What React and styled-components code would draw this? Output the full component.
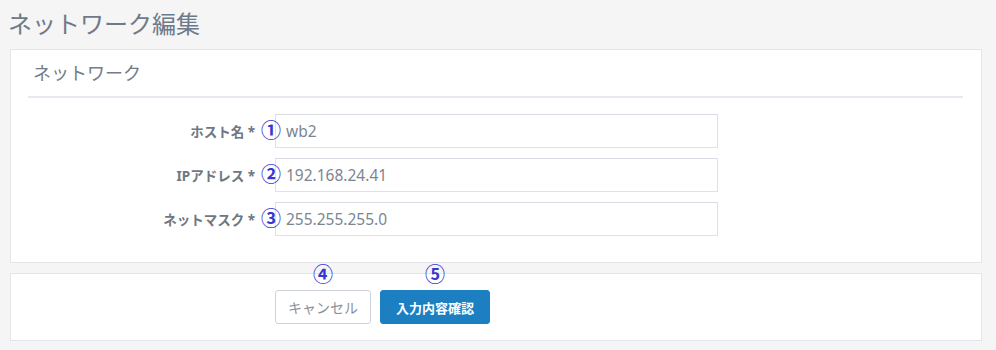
import React from 'react';
import styled, { createGlobalStyle } from 'styled-components';

const Global = createGlobalStyle`
  body {
    margin: 0;
    background: #f5f5f5;
    font-family: "Noto Sans", "Noto Sans CJK JP", sans-serif;
  }
`

const Page = styled.div`
  padding: 0 14px 0 10px;
`

const Title = styled.h1`
  margin: 0;
  padding: 6px 0 0 0;
  margin-left: -2px;
  height: 43px;
  font-size: 24px;
  font-weight: 400;
  color: #6d7a8a;
  line-height: 36px;
`

const Panel = styled.div`
  background: #fff;
  border: 1px solid #e4e4ea;
  margin-bottom: 10px;
  padding: ${p => p.$pad || '0'};
`

const Heading = styled.div`
  margin: 0 18px 0 17px;
  padding: 11px 5px 0 5px;
  height: 35px;
  font-size: 18px;
  color: #737d88;
  line-height: 24px;
  border-bottom: 2px solid #e6e9ef;
`

const Form = styled.div`
  display: flex;
  flex-direction: column;
  gap: 10px;
  padding: 16px 0 26px 0;
`

const Row = styled.div`
  display: flex;
  align-items: center;
`

const Label = styled.label`
  width: 264px;
  box-sizing: border-box;
  padding-right: 20px;
  text-align: right;
  font-size: 13.5px;
  font-weight: 700;
  color: #6f7782;
`

const Field = styled.div`
  position: relative;
`

const Input = styled.input`
  width: 443px;
  height: 34px;
  box-sizing: border-box;
  border: 1px solid #dfe1e8;
  border-top-color: #d8dbe3;
  padding: 0 10px;
  font-family: "Noto Sans", "Noto Sans CJK JP", sans-serif;
  font-size: 15.5px;
  color: #7b8591;
  outline: none;
`

const Mark = styled.span`
  position: absolute;
  font-family: "Noto Sans CJK JP", sans-serif;
  font-size: 20px;
  font-weight: 700;
  line-height: 20px;
  color: #3838cf;
  pointer-events: none;
  ${p => p.$side ? `
    left: -14px;
    top: 6px;
  ` : `
    left: 50%;
    transform: translateX(-50%);
    top: -27px;
  `}
`

const Actions = styled.div`
  display: flex;
  gap: 9px;
  padding-left: 264px;
`

const Button = styled.button`
  position: relative;
  height: 34px;
  box-sizing: border-box;
  padding: 0 ${p => p.$primary ? '15px' : '12px'};
  border-radius: 3px;
  font-family: "Noto Sans", "Noto Sans CJK JP", sans-serif;
  font-size: ${p => p.$primary ? '13px' : '14px'};
  font-weight: ${p => p.$primary ? 700 : 400};
  border: 1px solid ${p => p.$primary ? '#1b7fc2' : '#cfd2d8'};
  background: ${p => p.$primary ? '#1b7fc2' : '#fff'};
  color: ${p => p.$primary ? '#fff' : '#8a9099'};
`

const fields = [
  { label: 'ホスト名 *', value: 'wb2', mark: '①' },
  { label: 'IPアドレス *', value: '192.168.24.41', mark: '②' },
  { label: 'ネットマスク *', value: '255.255.255.0', mark: '③' },
]

export default function App() {
  return (
    <Page>
      <Global />
      <Title>ネットワーク編集</Title>
      <Panel>
        <Heading>ネットワーク</Heading>
        <Form>
          {fields.map(f => (
            <Row key={f.label}>
              <Label>{f.label}</Label>
              <Field>
                <Input defaultValue={f.value} />
                <Mark $side>{f.mark}</Mark>
              </Field>
            </Row>
          ))}
        </Form>
      </Panel>
      <Panel $pad="16px 0">
        <Actions>
          <Button>キャンセル<Mark>④</Mark></Button>
          <Button $primary>入力内容確認<Mark>⑤</Mark></Button>
        </Actions>
      </Panel>
    </Page>
  );
}
